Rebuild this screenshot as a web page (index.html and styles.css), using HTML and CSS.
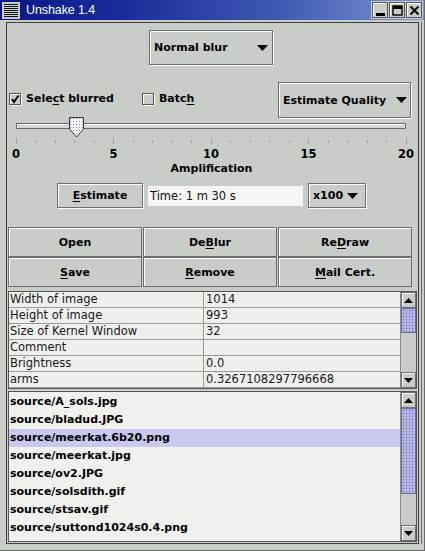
FILE: index.html
```html
<!DOCTYPE html>
<html>
<head>
<meta charset="utf-8">
<title>Unshake 1.4</title>
<link rel="stylesheet" href="styles.css">
</head>
<body>
<div class="window">
  <div class="titlebar">
    <div class="menu-icon"></div>
    <div class="title">Unshake 1.4</div>
    <div class="wbtns">
      <div class="wbtn"><svg width="13" height="13" viewBox="0 0 13 13"><rect x="2" y="9" width="9" height="3" fill="#000"/></svg></div>
      <div class="wbtn"><svg width="13" height="13" viewBox="0 0 13 13"><rect x="2" y="2" width="9" height="9" fill="none" stroke="#000" stroke-width="1.4"/><rect x="2" y="2" width="9" height="3" fill="#000"/></svg></div>
      <div class="wbtn"><svg width="13" height="13" viewBox="0 0 13 13"><path d="M2.5 2.5 L10.5 10.5 M10.5 2.5 L2.5 10.5" stroke="#000" stroke-width="2"/></svg></div>
    </div>
  </div>
  <div class="frame">
    <div class="panel">
      <div class="row-top">
        <div class="combo combo-blur"><span>Normal blur</span><svg class="arrow" width="11" height="6" viewBox="0 0 11 6"><path d="M0 0 H11 L5.5 6 Z" fill="#000"/></svg></div>
      </div>
      <div class="row-opts">
        <div class="check"><span class="box"><svg width="10" height="10" viewBox="0 0 10 10"><path d="M2 5 L4 8 L8.5 1.5" fill="none" stroke="#000" stroke-width="2"/></svg></span><span>Sele<u>c</u>t blurred</span></div>
        <div class="check batch"><span class="box"></span><span>Batc<u>h</u></span></div>
        <div class="combo combo-quality"><span>Estimate Quality</span><svg class="arrow" width="11" height="6" viewBox="0 0 11 6"><path d="M0 0 H11 L5.5 6 Z" fill="#000"/></svg></div>
      </div>
      <div class="slider">
        <div class="track"></div>
        <svg class="thumb" width="15" height="21" viewBox="0 0 15 21"><defs><pattern id="dots" width="3" height="3" patternUnits="userSpaceOnUse"><rect width="3" height="3" fill="#f2f2f6"/><rect x="1" y="1" width="1" height="1" fill="#8a8ab8"/></pattern></defs><path d="M0.5 0.5 H14.5 V12 L7.5 20 L0.5 12 Z" fill="url(#dots)" stroke="#3a3a3a"/></svg>
      </div>
      <div class="ticks">
        <svg width="411" height="6" viewBox="0 0 411 6">
          <g stroke="#9aa2b8" stroke-width="1">
            <path d="M9.5 0 V6 M28.5 2 V5 M48.5 2 V5 M67.5 2 V5 M87.5 2 V5 M106.5 0 V6 M126.5 2 V5 M145.5 2 V5 M165.5 2 V5 M184.5 2 V5 M204.5 0 V6 M223.5 2 V5 M243.5 2 V5 M262.5 2 V5 M282.5 2 V5 M301.5 0 V6 M321.5 2 V5 M340.5 2 V5 M360.5 2 V5 M379.5 2 V5 M399.5 0 V6"/>
          </g>
        </svg>
      </div>
      <div class="labels">
        <span class="lbl">0</span><span class="lbl">5</span><span class="lbl">10</span><span class="lbl">15</span><span class="lbl">20</span>
      </div>
      <div class="axis-title">Amplification</div>
      <div class="row-est">
        <div class="btn btn-est"><span><u>E</u>stimate</span></div>
        <div class="time-field">Time: 1 m 30 s</div>
        <div class="combo combo-x"><span>x100</span><svg class="arrow" width="11" height="6" viewBox="0 0 11 6"><path d="M0 0 H11 L5.5 6 Z" fill="#000"/></svg></div>
      </div>
      <div class="btn-grid">
        <div class="btn">Open</div>
        <div class="btn">De<u>B</u>lur</div>
        <div class="btn">Re<u>D</u>raw</div>
        <div class="btn"><u>S</u>ave</div>
        <div class="btn"><u>R</u>emove</div>
        <div class="btn"><u>M</u>ail Cert.</div>
      </div>
      <div class="table-wrap">
        <div class="table">
          <div class="tr"><div class="td c1">Width of image</div><div class="td c2">1014</div></div>
          <div class="tr"><div class="td c1">Height of image</div><div class="td c2">993</div></div>
          <div class="tr"><div class="td c1">Size of Kernel Window</div><div class="td c2">32</div></div>
          <div class="tr"><div class="td c1">Comment</div><div class="td c2"></div></div>
          <div class="tr"><div class="td c1">Brightness</div><div class="td c2">0.0</div></div>
          <div class="tr"><div class="td c1">arms</div><div class="td c2">0.3267108297796668</div></div>
        </div>
        <div class="scrollbar sb-table">
          <div class="sbtn"><svg width="9" height="5" viewBox="0 0 9 5"><path d="M0 5 H9 L4.5 0 Z" fill="#000"/></svg></div>
          <div class="sthumb"></div>
          <div class="strack"></div>
          <div class="sbtn"><svg width="9" height="5" viewBox="0 0 9 5"><path d="M0 0 H9 L4.5 5 Z" fill="#000"/></svg></div>
        </div>
      </div>
      <div class="list-wrap">
        <div class="list">
          <div class="li">source/A_sols.jpg</div>
          <div class="li">source/bladud.JPG</div>
          <div class="li sel">source/meerkat.6b20.png</div>
          <div class="li">source/meerkat.jpg</div>
          <div class="li">source/ov2.JPG</div>
          <div class="li">source/solsdith.gif</div>
          <div class="li">source/stsav.gif</div>
          <div class="li">source/suttond1024s0.4.png</div>
        </div>
        <div class="scrollbar sb-list">
          <div class="sbtn"><svg width="9" height="5" viewBox="0 0 9 5"><path d="M0 5 H9 L4.5 0 Z" fill="#000"/></svg></div>
          <div class="sthumb"></div>
          <div class="strack"></div>
          <div class="sbtn"><svg width="9" height="5" viewBox="0 0 9 5"><path d="M0 0 H9 L4.5 5 Z" fill="#000"/></svg></div>
        </div>
      </div>
    </div>
  </div>
</div>
</body>
</html>
```
FILE: styles.css
```css
* { box-sizing: border-box; margin: 0; padding: 0; }
body {
  margin: 0;
  background: #c9cdc8;
  font-family: "DejaVu Sans", "Noto Sans", sans-serif;
  font-size: 11px;
  color: #000;
}
u { text-decoration: underline; text-underline-offset: 2px; }

.window {
  width: 425px;
  height: 551px;
  background: #c9cdc8;
  display: flex;
  flex-direction: column;
  overflow: hidden;
  border-right: 1px solid #6a6a6a;
  border-bottom: 1px solid #6a6a6a;
}

/* title bar */
.titlebar {
  height: 20px;
  flex: none;
  display: flex;
  align-items: center;
  padding: 0 1px 0 2px;
  background: linear-gradient(90deg, #0b1886 0%, #1a2d9c 30%, #3e58b2 65%, #7a94d2 100%);
}
.menu-icon {
  width: 18px;
  height: 17px;
  border: 2px solid #c8c8c8;
  background: repeating-linear-gradient(to bottom, #111 0 1px, #d0d0d0 1px 2px);
}
.title {
  margin-left: 6px;
  color: #fff;
  font-family: "Liberation Sans", Arial, sans-serif;
  font-size: 12.5px;
  letter-spacing: -0.1px;
}
.wbtns {
  margin-left: auto;
  display: flex;
  gap: 1px;
  padding: 1px 1px;
  background: #c9cdc8;
}
.wbtn {
  width: 16px;
  height: 16px;
  border: 1px solid #555;
  box-shadow: inset 1px 1px 0 #fff;
  background: #c9cdc8;
  display: flex;
  align-items: center;
  justify-content: center;
}

/* frame */
.frame {
  flex: 1;
  padding: 2px 5px 6px 6px;
  display: flex;
}
.panel {
  flex: 1;
  border: 1px solid #3e3e3e;
  box-shadow: 2px 0 0 #c9cdc8, 3px 0 0 #6a6a6a;
  display: flex;
  flex-direction: column;
  font-weight: bold;
}

/* combos & buttons */
.combo {
  display: flex;
  align-items: center;
  justify-content: space-between;
  border: 1px solid #6e6e6e;
  box-shadow: inset 1px 1px 0 #fff, 1px 1px 0 #fff;
  background: #c9cdc8;
  padding: 0 8px 0 4px;
}
.row-top {
  margin-top: 7px;
  height: 35px;
  display: flex;
  padding-left: 142px;
}
.combo-blur { width: 124px; height: 35px; padding-right: 4px; }

.row-opts {
  margin-top: 17px;
  height: 36px;
  display: flex;
  align-items: center;
}
.check {
  display: flex;
  align-items: center;
  gap: 5px;
  margin-top: -3px;
}
.check:first-child { margin-left: 2px; }
.check.batch { margin-left: 28px; }
.box {
  width: 12px;
  height: 12px;
  border: 1px solid #555;
  box-shadow: inset 1px 1px 0 #fff, 1px 1px 0 #fff;
  background: #c9cdc8;
  display: flex;
  align-items: center;
  justify-content: center;
}
.combo-quality {
  margin-left: auto;
  margin-right: 7px;
  width: 133px;
  height: 36px;
  padding: 0 3px 0 4px;
}

/* slider */
.slider {
  position: relative;
  height: 20px;
  padding: 5px 12px 0 9px;
}
.track {
  height: 6px;
  border: 1px solid #6a6a6a;
  box-shadow: inset 1px 1px 0 #fff;
  background: #d4d7d2;
}
.thumb {
  position: absolute;
  left: 62px;
  top: -1px;
}
.ticks { height: 6px; display: flex; }
.ticks svg { display: block; }
.labels {
  height: 17px;
  display: flex;
  justify-content: space-between;
  align-items: center;
  padding: 3px 12px 0 9px;
  font-size: 11.5px;
}
.lbl {
  width: 0;
  display: flex;
  justify-content: center;
  white-space: nowrap;
}
.axis-title {
  height: 16px;
  text-align: center;
  line-height: 16px;
  padding-right: 2px;
}

/* estimate row */
.row-est {
  margin-top: 6px;
  height: 25px;
  display: flex;
  align-items: center;
  padding-left: 50px;
}
.btn {
  display: flex;
  align-items: center;
  justify-content: center;
  border: 1px solid #6e6e6e;
  box-shadow: inset 1px 1px 0 #fff, 1px 1px 0 #fff;
  background: #c9cdc8;
}
.btn-est { width: 86px; height: 25px; }
.time-field {
  margin-left: 5px;
  width: 155px;
  height: 20px;
  background: #f5f6f3;
  font-weight: normal;
  font-size: 11.5px;
  padding-left: 2px;
  line-height: 20px;
  color: #111;
}
.combo-x { margin-left: 5px; width: 58px; height: 25px; padding: 0 7px 0 4px; }

/* button grid */
.btn-grid {
  margin-top: 19px;
  display: grid;
  grid-template-columns: 134px 134px 134px;
  grid-template-rows: 30px 30px;
  column-gap: 1px;
  row-gap: 0;
  padding-left: 1px;
}
.btn-grid .btn { box-shadow: inset 1px 1px 0 #fff; }

/* table */
.table-wrap {
  margin-top: 4px;
  margin-left: 1px;
  width: 409px;
  height: 98px;
  border: 1px solid #555;
  display: flex;
}
.table {
  flex: 1;
  background: #eef0ec;
  font-weight: normal;
  font-size: 11.5px;
  color: #1a1a1a;
}
.tr {
  height: 16px;
  display: flex;
  border-bottom: 1px solid #9a9a9a;
}
.td {
  line-height: 15px;
  padding-left: 1px;
  white-space: nowrap;
  overflow: hidden;
}
.c1 { width: 195px; border-right: 1px solid #9a9a9a; }
.c2 { flex: 1; padding-left: 2px; }

/* scrollbars */
.scrollbar {
  width: 16px;
  display: flex;
  flex-direction: column;
  border-left: 1px solid #8a8a8a;
  background: #c9cdc8;
}
.sbtn {
  height: 16px;
  flex: none;
  border: 1px solid #6e6e6e;
  box-shadow: inset 1px 1px 0 #fff;
  background: #c9cdc8;
  display: flex;
  align-items: center;
  justify-content: center;
}
.sthumb {
  flex: none;
  border: 1px solid #6a6ab0;
  background-color: #b4b4e4;
  background-image: radial-gradient(circle, #6868a8 0.7px, transparent 0.9px);
  background-size: 3px 3px;
}
.strack { flex: 1; }
.sb-table .sthumb { height: 25px; }
.sb-list .sthumb { height: 86px; }

/* list */
.list-wrap {
  margin-top: 2px;
  margin-left: 1px;
  width: 409px;
  height: 151px;
  border: 1px solid #555;
  display: flex;
}
.list {
  flex: 1;
  background: #eff1ed;
  padding-top: 1px;
}
.li {
  height: 18px;
  line-height: 18px;
  padding-left: 1px;
  white-space: nowrap;
}
.li.sel { background: #c9c9f0; }
```
